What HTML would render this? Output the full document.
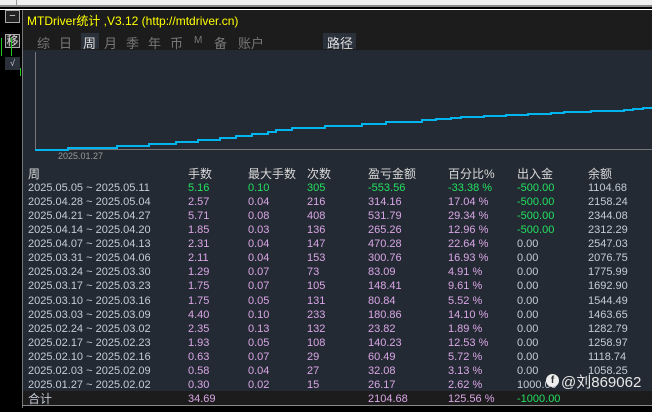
<!DOCTYPE html><html><head><meta charset="utf-8"><style>
*{margin:0;padding:0;box-sizing:border-box}
body{width:652px;height:412px;background:#000;position:relative;overflow:hidden;font-family:"Liberation Sans","Noto Sans CJK SC",sans-serif;font-size:11px}
.a{position:absolute;white-space:nowrap}
.r{position:absolute;left:0;width:652px;height:14px}
.r span{position:absolute;top:0;line-height:14px}
.d{color:#c4cbd8}.p{color:#d9a6e6}.g{color:#22e060}
</style></head><body>
<div class="a" style="left:0;top:0;width:652px;height:5px;background:#efefef"></div>
<div class="a" style="left:0;top:5px;width:652px;height:2px;background:#8a8a8a"></div>
<div class="a" style="left:0;top:9px;width:652px;height:1px;background:#fff"></div>
<div class="a" style="left:16px;top:0;width:1px;height:5px;background:#999"></div>
<div class="a" style="left:22px;top:10px;width:630px;height:40px;background:#1c1c1c"></div>
<div class="a" style="left:22px;top:10px;width:1px;height:398px;background:#777"></div>
<div class="a" style="left:23px;top:50px;width:629px;height:341px;background:#242a33"></div>
<div class="a" style="left:23px;top:391px;width:629px;height:14px;background:#1c1c1c"></div>
<div class="a" style="left:22px;top:405px;width:630px;height:1px;background:#888"></div>
<div class="a" style="left:5px;top:10px;width:15px;height:13px;border:1px solid #aaa;background:#222;color:#ddd;font-size:11px;line-height:10px;text-align:center">−</div>
<div class="a" style="left:5px;top:34px;width:15px;height:14px;border:1px solid #aaa;background:#222;color:#ddd;font-size:12px;line-height:12px;text-align:center">移</div>
<div class="a" style="left:5px;top:57px;width:15px;height:13px;background:#2a313b;color:#ccc;font-size:9px;line-height:13px;text-align:center">√</div>
<div class="a" style="left:1px;top:38px;width:11px;height:18px;border-left:1px solid #2c2;border-right:1px solid #2c2"></div>
<div class="a" style="left:20px;top:68px;width:1px;height:8px;background:#2c2"></div>
<div class="a" style="left:27px;top:12px;color:#ff0;font-size:12px">MTDriver统计 ,V3.12 (http://mtdriver.cn)</div>
<div class="a" style="left:81px;top:33px;width:18px;height:16px;background:#2a313b"></div>
<div class="a" style="left:323px;top:33px;width:33px;height:16px;background:#2a313b"></div>
<div class="a" style="left:37px;top:33px;color:#777;font-size:13px">
<span style="position:absolute;left:0">综</span><span style="position:absolute;left:22px">日</span><span style="position:absolute;left:46px;color:#ddd">周</span><span style="position:absolute;left:67px">月</span><span style="position:absolute;left:89px">季</span><span style="position:absolute;left:111px">年</span><span style="position:absolute;left:133px">币</span><span style="position:absolute;left:157px;font-size:10px;top:2px">M</span><span style="position:absolute;left:177px">备</span><span style="position:absolute;left:201px">账户</span><span style="position:absolute;left:290px;color:#ddd">路径</span></div>
<svg class="a" style="left:0;top:0" width="652" height="170">
<line x1="35.5" y1="52" x2="35.5" y2="150" stroke="#777"/>
<line x1="35" y1="149.5" x2="652" y2="149.5" stroke="#777"/>
<polyline fill="none" stroke="#00b4ee" stroke-width="2" points="35,150 68,150 68,148 117,148 117,146 149,146 149,144 176,144 176,142 198,142 198,140 220,140 220,138 236,138 236,136 252,136 252,134 268,134 268,132 276,132 276,130 292,130 292,128 325,128 325,126 362,126 362,124 386,124 386,122 422,122 422,120 436,120 436,119 451,119 451,118 461,118 461,117 484,117 484,116 506,116 506,115 528,115 528,114 551,114 551,113 564,113 564,112 591,112 591,111 624,111 624,110 633,110 633,109 643,109 643,108 652,108"/>
</svg>
<div class="a" style="left:58px;top:151px;color:#999;font-size:9px">2025.01.27</div>
<div class="r" style="top:167px;color:#d8d8d8;font-size:12px"><span style="left:28px">周</span><span style="left:188px">手数</span><span style="left:248px">最大手数</span><span style="left:307px">次数</span><span style="left:368px">盈亏金额</span><span style="left:448px">百分比%</span><span style="left:517px">出入金</span><span style="left:588px">余额</span></div>
<div id="rows"></div>
<script>
var d=[["2025.05.05 ~ 2025.05.11","5.16","0.10","305","-553.56","-33.38 %","-500.00","1104.68",1],
["2025.04.28 ~ 2025.05.04","2.57","0.04","216","314.16","17.04 %","-500.00","2158.24"],
["2025.04.21 ~ 2025.04.27","5.71","0.08","408","531.79","29.34 %","-500.00","2344.08"],
["2025.04.14 ~ 2025.04.20","1.85","0.03","136","265.26","12.96 %","-500.00","2312.29"],
["2025.04.07 ~ 2025.04.13","2.31","0.04","147","470.28","22.64 %","0.00","2547.03"],
["2025.03.31 ~ 2025.04.06","2.11","0.04","153","300.76","16.93 %","0.00","2076.75"],
["2025.03.24 ~ 2025.03.30","1.29","0.07","73","83.09","4.91 %","0.00","1775.99"],
["2025.03.17 ~ 2025.03.23","1.75","0.07","105","148.41","9.61 %","0.00","1692.90"],
["2025.03.10 ~ 2025.03.16","1.75","0.05","131","80.84","5.52 %","0.00","1544.49"],
["2025.03.03 ~ 2025.03.09","4.40","0.10","233","180.86","14.10 %","0.00","1463.65"],
["2025.02.24 ~ 2025.03.02","2.35","0.13","132","23.82","1.89 %","0.00","1282.79"],
["2025.02.17 ~ 2025.02.23","1.93","0.05","108","140.23","12.53 %","0.00","1258.97"],
["2025.02.10 ~ 2025.02.16","0.63","0.07","29","60.49","5.72 %","0.00","1118.74"],
["2025.02.03 ~ 2025.02.09","0.58","0.04","27","32.08","3.13 %","0.00","1058.25"],
["2025.01.27 ~ 2025.02.02","0.30","0.02","15","26.17","2.62 %","1000.00",""]];
var x=[28,188,248,307,368,448,517,588],h="";
d.forEach(function(r,i){h+='<div class="r" style="top:'+(181+i*14.07)+'px">';
for(var j=0;j<8;j++){var c;if(j==0||j==7)c='d';else if(r[8])c='g';else if(j==6)c=(r[6]=="-500.00"?'g':'d');else c='p';
h+='<span class="'+c+'" style="left:'+x[j]+'px">'+r[j]+'</span>';}h+='</div>';});
document.getElementById('rows').innerHTML=h;
</script>
<div class="r" style="top:392px;font-size:11px"><span class="d" style="left:28px;font-size:12px">合计</span><span class="p" style="left:188px">34.69</span><span class="p" style="left:368px">2104.68</span><span class="p" style="left:448px">125.56 %</span><span class="g" style="left:517px">-1000.00</span></div>
<div class="a" style="left:546px;top:374px;width:13px;height:13px;border-radius:50%;background:#eee;color:#333;font-size:10px;font-weight:bold;line-height:13px;text-align:center">f</div>
<div class="a" style="left:561px;top:371px;color:#e8e8e8;font-size:15px">@刘869062</div>
</body></html>
